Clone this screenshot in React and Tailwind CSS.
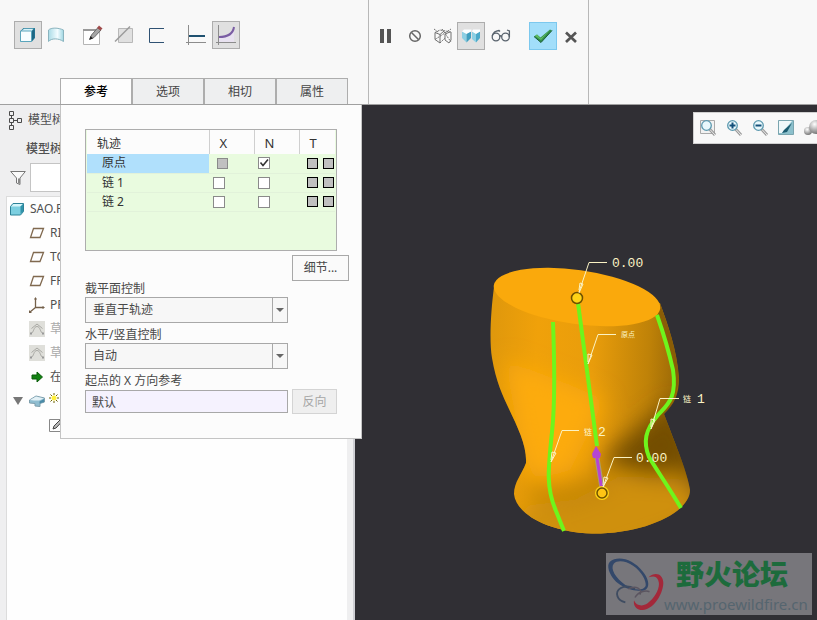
import { useState } from "react";
import clsx from "clsx";

const TABS = ["参考", "选项", "相切", "属性"];

const TRAJECTORIES = [
  { name: "原点", locked: true, n: true },
  { name: "链 1", locked: false, n: false },
  { name: "链 2", locked: false, n: false },
];

const TREE = [
  { icon: <DatumPlane />, text: "RIGHT" },
  { icon: <DatumPlane />, text: "TOP" },
  { icon: <DatumPlane />, text: "FRONT" },
  { icon: <Csys />, text: "PRT" },
  { icon: <SketchDisabled />, text: "草绘", muted: true },
  { icon: <SketchDisabled />, text: "草绘", muted: true },
  { icon: <InsertArrow />, text: "在此" },
];

/* ---------- toolbar icons ---------- */

function SolidIcon() {
  return (
    <svg viewBox="0 0 20 20" className="size-5">
      <path d="M2.500 6 5.500 3H17v10l-3 3.500H2.500z" fill="#2b7f9b" />
      <path d="M3.500 6 6 3.700h9.500L13.500 6z" fill="#d8f3fa" />
      <path d="M2.500 6h11v10.500h-11z" fill="#f6fdff" stroke="#5aa5bc" />
      <path d="M14 6.500 16.500 4v8.500L14 15.500z" fill="#1d6784" />
    </svg>
  );
}

function SurfaceIcon() {
  return (
    <svg viewBox="0 0 20 20" className="size-5">
      <defs>
        <linearGradient id="surf" x1="0" x2="1">
          <stop offset="0" stopColor="#a9dbe6" />
          <stop offset=".6" stopColor="#f2fcff" />
          <stop offset="1" stopColor="#9fd6e2" />
        </linearGradient>
      </defs>
      <path d="M2.500 5C5 2.500 12 2.500 17.500 5v11.500c-5-3.500-12-3.500-15 0z" fill="url(#surf)" stroke="#8ab4bf" />
    </svg>
  );
}

function SketchIcon() {
  return (
    <svg viewBox="0 0 22 22" className="size-[22px]">
      <path d="M2.500 5.500h16v15h-16z" fill="#fff" stroke="#b5b5b5" />
      <path d="M2 6h17" stroke="#999" strokeWidth="2" />
      <path d="m9 15 1.500-4L17 3.500l3 2.500-7 7.500z" fill="#a5a5a5" stroke="#6a6a6a" />
      <path d="m16 4 2-2.500 3.500 3-2 2z" fill="#a04a4a" />
      <path d="m8 16 1.500-4 2.500 2.500z" fill="#222" />
    </svg>
  );
}

function RemoveIcon() {
  return (
    <svg viewBox="0 0 20 20" className="size-5">
      <path d="M4.500 3.500h14v14h-14z" fill="#e0e0e0" stroke="#b8b8b8" />
      <path d="M1 16.500 16 1.500" stroke="#9a9a9a" strokeWidth="1.500" />
    </svg>
  );
}

function ThinIcon() {
  return (
    <svg viewBox="0 0 20 20" className="size-5">
      <path d="M18 3.500H3.500v14H18" fill="none" stroke="#2f5273" />
    </svg>
  );
}

function ConstantIcon() {
  return (
    <svg viewBox="0 0 20 20" className="size-5">
      <path d="M2.500 0v20M0 17.500h20" stroke="#8c8c8c" />
      <path d="M3 11h16" stroke="#1f5170" strokeWidth="2" />
    </svg>
  );
}

function VariableIcon() {
  return (
    <svg viewBox="0 0 20 20" className="size-5">
      <path d="M3 12c8 0 14-3 15-10v15H3z" fill="#e8e2f0" />
      <path d="M2.500 0v20M0 17.500h20" stroke="#8c8c8c" />
      <path d="M3 12c8 0 14-3 15-10" fill="none" stroke="#7a5da3" strokeWidth="2" />
    </svg>
  );
}

function PauseIcon() {
  return (
    <svg viewBox="0 0 12 14" className="h-3.5 w-3">
      <path d="M1 0h4v14H1zM8 0h4v14H8z" fill="#555" />
    </svg>
  );
}

function NoPreviewIcon() {
  return (
    <svg viewBox="0 0 14 14" className="size-3.5">
      <circle cx="7" cy="7" r="5.300" fill="none" stroke="#666" strokeWidth="1.500" />
      <path d="m3.500 3.500 7 7" stroke="#666" strokeWidth="1.500" />
    </svg>
  );
}

function WireIcon() {
  return (
    <svg viewBox="0 0 20 16" className="h-4 w-5" fill="none" stroke="#707070">
      <path d="M2 4.500 7 6.500 11 3M2 4.500v7L7 15V6.500M12 6l5-2M12 6v6l4 3 2-3V4" />
      <path d="M2 4.500 7 2l11 2M7 15l5-5M2 11.500 18 1M9 1l9 13M1 1l4 3" strokeDasharray="2 1" />
    </svg>
  );
}

function ShadedPreviewIcon() {
  return (
    <svg viewBox="0 0 20 16" className="h-4 w-5">
      <path d="M1 3.500 5.500 5v9.500L1 10z" fill="#8ccfe3" />
      <path d="M5.500 5 10 3.500V10l-4.500 4.500z" fill="#3f9fbf" />
      <path d="m11 3.500 4 2v9L11 11z" fill="#8ccfe3" />
      <path d="m15 5.500 4-2V10l-4 4.500z" fill="#4aa9c9" />
      <path d="m1 3.500 2-2h7.500l-.5 2L5.500 6zM11 3.500l1-2h7l0 2-4 2.500z" fill="#fbfeff" />
    </svg>
  );
}

function GlassesIcon() {
  return (
    <svg viewBox="0 0 20 14" className="h-3.5 w-5" fill="none" stroke="#59636d" strokeWidth="1.300">
      <circle cx="5" cy="8" r="3.800" />
      <circle cx="14.500" cy="8" r="3.800" />
      <path d="M8.700 7.500c.8-1 1.500-1 2 0M1.200 7C2 4 4 2 8 1.500l1 1M18.400 8V2L16 1" />
    </svg>
  );
}

function CheckGreen() {
  return (
    <svg viewBox="0 0 20 16" className="h-4 w-5">
      <path d="m1 8.500 3-2 3.500 3L17 1.500l2 1L8 14.500z" fill="#2f8f4b" />
      <path d="m2 8 2-1.500 3.500 4L17 2 8 12z" fill="#62bd62" />
      <path d="M1 8.500 8 14.500l11-12" fill="none" stroke="#1d5d38" />
    </svg>
  );
}

function CrossIcon() {
  return (
    <svg viewBox="0 0 12 12" className="mt-0.5 size-3">
      <path d="m1 1.500 10 9.500M11 1.500 1 11" stroke="#555" strokeWidth="2.700" />
    </svg>
  );
}

/* ---------- tree icons ---------- */

function TreeGlyph() {
  return (
    <svg viewBox="0 0 14 20" className="h-5 w-3.5" fill="none" stroke="#4b4b4b">
      <path d="M1.500 1.500h4v4h-4zM1.500 8.500h4v4h-4zM1.500 15.500h4v4h-4zM9.500 8.500h4v4h-4zM3.500 5.500v3M3.500 12.500v3M5.500 10.500h4" />
    </svg>
  );
}

function FunnelIcon() {
  return (
    <svg viewBox="0 0 16 16" className="size-4">
      <path d="M.7 1.500h14.600L10 8v6.500L6.500 13V8z" fill="#fafafa" stroke="#777" />
      <path d="M9 8.500v5" stroke="#888" strokeWidth="2" />
    </svg>
  );
}

function PartIcon() {
  return (
    <svg viewBox="0 0 14 14" className="size-3.5">
      <path d="M.5 4.500 3 1.500h10.500v8L10.500 13H.5z" fill="#7ccfe0" stroke="#2d8398" />
      <path d="M1 4.500 3.500 2H13l-2.500 2.500z" fill="#d5f5fa" />
      <path d="M10.500 4.500 13 2v7.500L10.500 12z" fill="#3193aa" />
    </svg>
  );
}

function DatumPlane() {
  return (
    <svg viewBox="0 0 16 16" className="size-4">
      <path d="M4.500 3.500h10l-3.500 9H1.500z" fill="none" stroke="#80694f" strokeWidth="1.300" />
    </svg>
  );
}

function Csys() {
  return (
    <svg viewBox="0 0 16 16" className="size-4">
      <path d="M6.500 1v9.500H15M6.500 10.500 1 15" fill="none" stroke="#74604a" strokeWidth="1.300" />
      <path d="m5 2.500 1.500-2.500L8 2.500zM13.500 9l2.500 1.500-2.500 1.500zM0 13v3h3z" fill="#74604a" />
    </svg>
  );
}

function SketchDisabled() {
  return (
    <svg viewBox="0 0 16 16" className="size-4">
      <path d="M0 0h16v16H0z" fill="#dfdfda" />
      <path d="M2 12.500c3-1 2.500-7 6-7s3 6 6 7M2.500 7.500 8 3l5.500 4.500" fill="none" stroke="#a9a9a4" />
      <path d="M2 11.500v2M14 11.500v2" stroke="#999" strokeWidth="2" />
    </svg>
  );
}

function InsertArrow() {
  return (
    <svg viewBox="0 0 16 16" className="size-4">
      <path d="M3 6h5V3l5.500 5L8 13v-3H3z" fill="#128212" stroke="#0a5c0a" />
    </svg>
  );
}

function SweepIcon() {
  return (
    <svg viewBox="0 0 16 14" className="h-3.5 w-4">
      <path d="M.5 6 7 2l8.500 2v4L11 9.500v3l-5-.5V9.500L.5 9z" fill="#8fbdd0" stroke="#7f9fad" />
      <path d="M1 6 7 2.500 15 4.500l-5 2H5z" fill="#e3f1f6" />
      <path d="M10.500 7.500 15 5v3l-4.500 1.500z" fill="#4a8ba8" />
    </svg>
  );
}

function SparkIcon() {
  return (
    <svg viewBox="0 0 10 10" className="-mt-1.5 size-2.5">
      <circle cx="5" cy="5" r="2.500" fill="#ffef3a" />
      <path d="M5 0v2M5 8v2M0 5h2M8 5h2M1.500 1.500 3 3M7 7l1.500 1.500M8.500 1.500 7 3M3 7 1.500 8.500" stroke="#6d6000" />
    </svg>
  );
}

function SectionIcon() {
  return (
    <svg viewBox="0 0 14 14" className="size-3.5">
      <path d="M.5 1.500h13v12H.5z" fill="#fff" stroke="#888" />
      <path d="m4 11 1-3 7-7 1.500 2L7 10z" fill="#bbb" stroke="#444" />
    </svg>
  );
}

/* ---------- view toolbar icons ---------- */

function Magnifier({ mode }) {
  return (
    <svg viewBox="0 0 18 18" className="size-[18px]">
      {mode === "fit" && <path d="M1.500 1.500h14v13h-14z" fill="#f2f2f2" stroke="#aaa" />}
      <path d="m10.500 10 5.500 6" stroke="#9b9b9b" strokeWidth="3" />
      <path d="m11 10.500 5 5.500" stroke="#ececec" />
      <circle cx="7.500" cy="6.500" r="4.800" fill="#e9f8fc" stroke="#5b98ae" strokeWidth="1.300" />
      {mode !== "fit" && <path d="M4.500 6.500h6" stroke="#14507a" strokeWidth="2" />}
      {mode === "in" && <path d="M7.500 3.500v6" stroke="#14507a" strokeWidth="2" />}
    </svg>
  );
}

function RepaintIcon() {
  return (
    <svg viewBox="0 0 18 18" className="size-[18px]">
      <path d="M1.500 1.500h15v14h-15z" fill="#8cc0cc" stroke="#7aa5af" />
      <path d="M2 2h13L5 14H2z" fill="#f0f8fa" />
      <path d="m5 14 2-3 8-7-5 9z" fill="#1b5b70" />
    </svg>
  );
}

function ShadeIcon() {
  return (
    <svg viewBox="0 0 18 18" className="size-[18px]">
      <defs>
        <radialGradient id="ball" cx=".4" cy=".3" r=".7">
          <stop offset="0" stopColor="#fff" />
          <stop offset="1" stopColor="#777" />
        </radialGradient>
      </defs>
      <circle cx="5" cy="12" r="4" fill="url(#ball)" />
      <circle cx="13" cy="8" r="7" fill="url(#ball)" />
    </svg>
  );
}

/* ---------- pieces ---------- */

function ToolButton({ label, active, confirm, className, children }) {
  return (
    <button
      type="button"
      aria-label={label}
      className={clsx(
        "flex size-7 shrink-0 items-center justify-center border",
        active && "border-[#adadad] bg-[#e0e0e0]",
        confirm && "border-[#7cc8ee] bg-[#a2defa]",
        !active && !confirm && "border-transparent",
        className
      )}
    >
      {children}
    </button>
  );
}

function Ribbon({ tab, onTab }) {
  return (
    <header className="flex h-[105px] shrink-0 border-b border-[#a0a0a0] bg-[#f8f8f8]">
      <div className="flex w-[369px] shrink-0 flex-col justify-between border-r border-[#b8b8b8]">
        <div className="flex pt-[21px] pl-3.5">
          <ToolButton label="实体" active><SolidIcon /></ToolButton>
          <ToolButton label="曲面"><SurfaceIcon /></ToolButton>
          <ToolButton label="草绘" className="ml-2"><SketchIcon /></ToolButton>
          <ToolButton label="移除材料" className="ml-1"><RemoveIcon /></ToolButton>
          <ToolButton label="薄板" className="ml-1"><ThinIcon /></ToolButton>
          <ToolButton label="恒定截面" className="ml-3"><ConstantIcon /></ToolButton>
          <ToolButton label="可变截面" active className="ml-0.5"><VariableIcon /></ToolButton>
        </div>
        <nav className="flex pl-15" role="tablist">
          {TABS.map((name) => (
            <button
              key={name}
              type="button"
              role="tab"
              aria-selected={tab === name}
              onClick={() => onTab(name)}
              className={clsx(
                "h-[26px] w-18 border border-b-0 border-[#adadad] text-xs",
                tab === name ? "bg-[#fdfdfd] font-medium text-black" : "bg-[#eeeff0] text-[#444]"
              )}
            >
              {name}
            </button>
          ))}
        </nav>
      </div>
      <div className="flex w-55 shrink-0 items-start border-r border-[#b8b8b8] pt-[22px] pl-0.5">
        <ToolButton label="暂停"><PauseIcon /></ToolButton>
        <ToolButton label="无预览" className="ml-0.5"><NoPreviewIcon /></ToolButton>
        <ToolButton label="分离"><WireIcon /></ToolButton>
        <ToolButton label="连接" active><ShadedPreviewIcon /></ToolButton>
        <ToolButton label="特征预览" className="ml-0.5"><GlassesIcon /></ToolButton>
        <ToolButton label="确定" confirm className="ml-3.5"><CheckGreen /></ToolButton>
        <ToolButton label="取消"><CrossIcon /></ToolButton>
      </div>
    </header>
  );
}

function ModelTree() {
  return (
    <aside className="flex w-[355px] shrink-0 flex-col border-r-2 border-[#cfd0d4] bg-[#efeff0] pr-1.5 text-xs text-[#505050]">
      <div className="flex h-[30px] items-center gap-1.5 pl-2">
        <TreeGlyph />
        <span>模型树</span>
      </div>
      <div className="flex h-7 items-center pl-[26px] font-medium">模型树</div>
      <div className="flex h-[29px] items-center gap-1 pl-2.5">
        <FunnelIcon />
        <input aria-label="过滤" className="h-full flex-1 border border-[#c4c4c4] bg-white px-1" />
      </div>
      <ul className="mt-1 ml-1.5 flex-1 border-t border-l border-[#dcdcdc] bg-[#fefefe]">
        <li className="flex h-6 items-center gap-1.5 pl-[3px]">
          <PartIcon />
          <span>SAO.PRT</span>
        </li>
        {TREE.map((item, i) => (
          <li
            key={i}
            className={clsx("flex h-6 items-center gap-[5px] pl-[22px]", item.muted && "text-[#aaa]")}
          >
            {item.icon}
            <span>{item.text}</span>
          </li>
        ))}
        <li className="flex h-6 items-center gap-1 pl-1.5">
          <svg viewBox="0 0 10 8" className="h-2 w-2.5">
            <path d="M0 0h10L5 8z" fill="#777" />
          </svg>
          <span className="flex items-center gap-1 pl-0.5">
            <SweepIcon />
            <SparkIcon />
          </span>
          <span>扫描</span>
        </li>
        <li className="flex h-6 items-center gap-1 pl-[42px]">
          <SectionIcon />
          <span>截面</span>
        </li>
      </ul>
    </aside>
  );
}

function TickBox({ label, checked, onChange }) {
  return (
    <label className="relative flex size-3 items-center justify-center">
      <input
        type="checkbox"
        aria-label={label}
        checked={checked}
        onChange={onChange}
        className="size-3 appearance-none border border-[#8a8a8a] bg-white"
      />
      {checked && (
        <svg viewBox="0 0 10 10" className="pointer-events-none absolute size-2.5">
          <path d="m1.500 4.500 2.500 3 5-6" fill="none" stroke="#333" strokeWidth="1.600" />
        </svg>
      )}
    </label>
  );
}

function TrajectoryTable() {
  const [normal, setNormal] = useState(TRAJECTORIES.map((t) => t.n));
  const [xFlags, setXFlags] = useState(TRAJECTORIES.map(() => false));
  const flip = (list, i) => list.map((v, k) => (k === i ? !v : v));

  return (
    <div className="h-[122px] w-[252px] border border-[#adadad] bg-[#e9fbdf] px-px">
      <table className="w-full table-fixed border-collapse text-[#333]">
        <thead>
          <tr className="h-6 bg-[#fcfcfc] text-left [&>th]:p-0 [&>th]:pt-1 [&>th]:font-normal">
            <th className="w-[122px]"><span className="pl-2.5">轨迹</span></th>
            <th className="w-[45px] border-l border-[#cfcfcf]"><span className="pl-2.5 text-[13px]">X</span></th>
            <th className="w-[45px] border-l border-[#cfcfcf]"><span className="pl-2.5 text-[13px]">N</span></th>
            <th className="border-l border-[#cfcfcf]"><span className="pl-2.5 text-[13px]">T</span></th>
          </tr>
        </thead>
        <tbody>
          {TRAJECTORIES.map((t, i) => (
            <tr key={t.name} className="h-[19px] border-b border-[#e2f2da] [&>td]:p-0">
              <td className={clsx("leading-[18px]", i === 0 && "bg-[#b0e0fc]")}>
                <span className="pl-[15px]">{t.name}</span>
              </td>
              <td>
                {t.locked ? (
                  <input
                    type="checkbox"
                    disabled
                    aria-label={`${t.name} X`}
                    className="ml-2 block size-[11px] appearance-none border border-[#8a8a8a] bg-[#c0c0c0]"
                  />
                ) : (
                  <div className="pl-1">
                    <TickBox label={`${t.name} X`} checked={xFlags[i]} onChange={() => setXFlags(flip(xFlags, i))} />
                  </div>
                )}
              </td>
              <td>
                <div className="pl-1">
                  <TickBox label={`${t.name} N`} checked={normal[i]} onChange={() => setNormal(flip(normal, i))} />
                </div>
              </td>
              <td>
                <div className="flex gap-[5px] pl-2">
                  <input type="checkbox" disabled aria-label={`${t.name} T1`} className="size-[11px] appearance-none border border-black bg-[#c0c0c0]" />
                  <input type="checkbox" disabled aria-label={`${t.name} T2`} className="size-[11px] appearance-none border border-black bg-[#c0c0c0]" />
                </div>
              </td>
            </tr>
          ))}
        </tbody>
      </table>
    </div>
  );
}

function SelectField({ id, label, options }) {
  return (
    <div>
      <label htmlFor={id} className="block h-5 pt-1 leading-4">{label}</label>
      <div className="relative w-[203px]">
        <select
          id={id}
          className="block h-[26px] w-full appearance-none border border-[#a8a8a8] bg-[#f7f7f7] pl-[7px]"
        >
          {options.map((o) => (
            <option key={o}>{o}</option>
          ))}
        </select>
        <span className="pointer-events-none absolute inset-y-0 right-0 flex w-4 items-center justify-center border border-[#a8a8a8]">
          <svg viewBox="0 0 8 4" className="h-1 w-2">
            <path d="M0 0h8L4 4z" fill="#666" />
          </svg>
        </span>
      </div>
    </div>
  );
}

function ReferencePanel() {
  return (
    <section className="absolute top-[105px] left-15 w-[302px] border border-t-0 border-[#c4c4c4] bg-[#fcfcfc] pt-6 pr-3 pb-6 pl-6 text-xs text-[#484848]">
      <TrajectoryTable />
      <div className="mt-1 flex justify-end">
        <button type="button" className="h-[26px] w-[57px] border border-[#a8a8a8] bg-[#fafafa]">
          细节...
        </button>
      </div>
      <div className="-mt-1 flex flex-col">
        <SelectField id="section" label="截平面控制" options={["垂直于轨迹", "垂直于投影", "恒定法向"]} />
        <SelectField id="horizontal" label="水平/竖直控制" options={["自动", "X 轨迹"]} />
        <label htmlFor="xdir" className="h-5 pt-1 leading-4">起点的 X 方向参考</label>
        <div className="flex items-center gap-1">
          <input
            id="xdir"
            defaultValue="默认"
            className="h-[23px] w-[203px] border border-[#a8a8a8] bg-[#f5f2fe] pl-1.5"
          />
          <button type="button" disabled className="h-[25px] w-[45px] border border-[#d4d4d4] bg-[#efefef] text-[#a6a6a6]">
            反向
          </button>
        </div>
      </div>
    </section>
  );
}

const BODY =
  "M494 287C491 310 489 340 492 358C496 382 503 396 509 409C518 428 527 446 526 463C522 474 514 482 514 494C516 514 548 532 592 533.500C646 534 690 512 690 490C688 474 676 446 664 414C674 404 679 395 679 378C677 350 668 325 660 303Z";

function Leader({ d, x, y, size, font, children }) {
  return (
    <g>
      <path d={d} fill="none" stroke="#fbf3c4" />
      <text x={x} y={y} fontSize={size} fill="#fbf3c4" fontFamily={font}>
        {children}
      </text>
    </g>
  );
}

function SweepModel() {
  const mono = "'Liberation Mono', monospace";
  const cjk = "'Noto Sans CJK SC', sans-serif";
  return (
    <svg viewBox="355 105 462 515" className="absolute inset-0 size-full">
      <defs>
        <linearGradient id="body" gradientUnits="userSpaceOnUse" x1="490" x2="690" y1="400" y2="410">
          <stop offset="0" stopColor="#e0980c" />
          <stop offset=".22" stopColor="#f0a10a" />
          <stop offset=".5" stopColor="#e99d0b" />
          <stop offset=".78" stopColor="#bf8208" />
          <stop offset="1" stopColor="#8a5d06" />
        </linearGradient>
        <filter id="soft" x="-50%" y="-50%" width="200%" height="200%">
          <feGaussianBlur stdDeviation="11" />
        </filter>
        <clipPath id="clip">
          <path d={BODY} />
        </clipPath>
      </defs>
      <path d={BODY} fill="url(#body)" />
      <g clipPath="url(#clip)">
        <g filter="url(#soft)">
          <path d="M505 360 570 385 605 400 570 470 535 480 520 440z" fill="#fdab0d" />
          <path d="M675 400C645 420 620 442 600 462L650 476 700 465z" fill="#734d04" />
          <path d="M500 530 530 505 575 500 620 476 690 480 705 520 600 560z" fill="#cf900b" />
          <path d="M518 478C550 492 590 485 606 462L612 490 570 505 530 500z" fill="#b57c08" opacity=".7" />
        </g>
        <path d="M660 303C668 325 677 350 679 378 678 386 676 392 673 398 674 370 664 335 657 312z" fill="#8a5d06" />
      </g>
      <ellipse cx="577" cy="297" rx="84" ry="27" transform="rotate(8 577 297)" fill="#faa90c" />

      <g fill="none" stroke="#6ff51c" strokeWidth="4">
        <path d="M553 322C555 375 555 405 552 432C548 470 546 488 556 511L564 531" />
        <path d="M578 303 597 446" />
        <path d="M657 315C664 335 669 352 673 370C677 398 668 404 658 415C645 430 643 442 649 457C656 469 668 486 681 508" />
      </g>

      <path d="M597 458 602 488" stroke="#a9a06c" strokeWidth="5" />
      <path d="M597 458 602 490" stroke="#b545d2" strokeWidth="3" />
      <path d="m596 446 5 8-1 4-7 0-1-4z" fill="#b545d2" />
      <circle cx="577" cy="298" r="5.500" fill="#ffd416" stroke="#6f5200" strokeWidth="1.500" />
      <circle cx="602" cy="493" r="7" fill="#ffd416" />
      <circle cx="602" cy="493" r="5" fill="#ffc414" stroke="#6f5200" strokeWidth="1.500" />

      <Leader d="M607 262.500H589L579 292M579 290l1-7 3 1-4 9" x={612} y={267} size={13} font={mono}>0.00</Leader>
      <Leader d="M616 334.500H598L588 364M588 362l0-8 4 1-4 9" x={621} y={337} size={7} font={cjk}>原点</Leader>
      <Leader d="M679 398.500H660L651 429M651 427l0-8 4 1-4 9" x={683} y={402} size={8} font={cjk}>链</Leader>
      <text x="697" y="403" fontSize="13" fill="#fbf3c4" fontFamily={mono}>1</text>
      <Leader d="M579 430.500H562L551 462M551 460l1-8 4 1-5 9" x={584} y={435} size={8} font={cjk}>链</Leader>
      <text x="598" y="436" fontSize="13" fill="#fbf3c4" fontFamily={mono}>2</text>
      <Leader d="M632 457.500H614L603 487M603 485l1-8 4 1-5 9" x={636} y={462} size={13} font={mono}>0.00</Leader>
    </svg>
  );
}

function ForumBadge() {
  return (
    <div className="absolute right-[5px] bottom-[5px] flex h-[62px] w-[206px] bg-[#77767b]">
      {/* each loop is a crescent: outer outline minus a shifted inner one */}
      <svg viewBox="0 0 60 62" className="h-[62px] w-[58px] shrink-0">
        <path
          fillRule="evenodd"
          fill="#33486a"
          d="M4 8C12 1 28 5 38 18C46 28 46 38 36 38C24 38 8 32 3 17C2 13 2 10 4 8ZM8 10C4 15 10 25 20 32C28 37 38 39 41 33C42 28 37 18 28 12C20 7 12 6 8 10Z"
        />
        <path
          fillRule="evenodd"
          fill="#a3283a"
          d="M44 24C52 17 61 22 59 33C57 45 48 57 38 58C31 58 28 53 29 48C31 53 37 55 43 51C51 45 57 34 54 27C52 22 48 23 44 24Z"
        />
        <path d="M30 36C18 30 9 37 12 44C13 47 16 49 20 50" fill="none" stroke="#3f4c61" strokeWidth="2" />
        <path d="M23 36c8-4 15 0 12 6M30 45c3-6 11-8 15-6" fill="none" stroke="#5b5560" strokeWidth="1.500" />
      </svg>
      <div className="flex flex-col">
        <span className="pl-3 font-['Noto_Sans_CJK_SC',sans-serif] text-[28px] leading-[41px] font-black whitespace-nowrap text-[#1d6b3c]">
          野火论坛
        </span>
        <span className="font-['Noto_Sans',sans-serif] text-[15px] leading-5 text-[#55656f]">www.proewildfire.cn</span>
      </div>
    </div>
  );
}

function Viewport() {
  return (
    <main className="relative min-h-[515px] flex-1 overflow-hidden bg-[#302f34]">
      <SweepModel />
      <div className="absolute top-[7px] right-0 flex h-8 w-31 items-center overflow-hidden border border-r-0 border-[#d0d0d0] bg-[#f8f8f8]">
        <ToolButton label="重新调整" className="-mr-0.5 border-0"><Magnifier mode="fit" /></ToolButton>
        <ToolButton label="放大" className="-mr-0.5 border-0"><Magnifier mode="in" /></ToolButton>
        <ToolButton label="缩小" className="-mr-0.5 border-0"><Magnifier mode="out" /></ToolButton>
        <ToolButton label="重画" className="-mr-0.5 border-0"><RepaintIcon /></ToolButton>
        <ToolButton label="显示样式" className="border-0"><ShadeIcon /></ToolButton>
      </div>
      <ForumBadge />
    </main>
  );
}

export default function App() {
  const [tab, setTab] = useState("参考");

  return (
    <div className="relative flex min-h-screen flex-col bg-[#f8f8f8] font-['Noto_Sans','Noto_Sans_CJK_SC',sans-serif]">
      <Ribbon tab={tab} onTab={setTab} />
      <div className="flex flex-1">
        <ModelTree />
        <Viewport />
      </div>
      <ReferencePanel />
    </div>
  );
}
